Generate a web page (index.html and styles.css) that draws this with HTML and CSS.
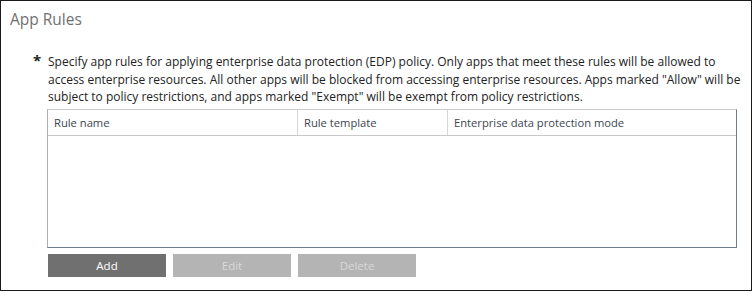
FILE: index.html
```html
<!DOCTYPE html>
<html>
<head>
<meta charset="utf-8">
<link rel="stylesheet" href="styles.css">
</head>
<body>
<div class="panel">
  <div class="title">App Rules</div>
  <div class="desc">
    <span class="req">*</span>
    <p class="text">Specify app rules for applying enterprise data protection (EDP) policy. Only apps that meet these rules will be allowed to access enterprise resources. All other apps will be blocked from accessing enterprise resources. Apps marked "Allow" will be subject to policy restrictions, and apps marked "Exempt" will be exempt from policy restrictions.</p>
  </div>
  <div class="grid">
    <div class="head">
      <div class="col c1">Rule name</div>
      <div class="col c2">Rule template</div>
      <div class="col c3">Enterprise data protection mode</div>
    </div>
    <div class="body"></div>
  </div>
  <div class="actions">
    <button class="btn primary">Add</button>
    <button class="btn disabled">Edit</button>
    <button class="btn disabled">Delete</button>
  </div>
</div>
</body>
</html>
```
FILE: styles.css
```css
html, body {
  margin: 0;
  padding: 0;
  background: #fff;
}
body {
  font-family: "Open Sans", "Noto Sans", sans-serif;
  font-size: 12px;
  color: #222;
}
.panel {
  width: 750px;
  height: 289px;
  border: 1px solid #1a1a1a;
  background: #fff;
}
.title {
  margin: 8px 0 0 9px;
  font-size: 15.5px;
  line-height: 20px;
  color: #707070;
}
.desc {
  display: flex;
  margin: 24px 0 0 32px;
}
.req {
  width: 15px;
  flex: none;
  font-size: 15px;
  font-weight: bold;
  line-height: 15px;
  color: #222;
}
.text {
  margin: 0;
  width: 706px;
  line-height: 17.5px;
  font-size: 12px;
}
.grid {
  margin: 3px 0 0 46px;
  width: 688px;
  height: 137px;
  border-style: solid;
  border-width: 1px;
  border-color: #c9c9c9 #6f7e8b #6f7e8b #a6afb7;
  display: flex;
  flex-direction: column;
}
.head {
  display: flex;
  height: 25px;
  border-bottom: 1px solid #c9c9c9;
}
.col {
  display: flex;
  align-items: center;
  padding-left: 6px;
  color: #3b4650;
  font-size: 11.2px;
}
.c1 { width: 243px; border-right: 1px solid #d6d6d6; }
.c2 { width: 143px; border-right: 1px solid #d6d6d6; }
.c3 { flex: 1; }
.body { flex: 1; }
.actions {
  display: flex;
  gap: 7px;
  margin: 6px 0 0 47px;
}
.btn {
  width: 118px;
  height: 23px;
  border: 0;
  padding: 0;
  font-family: "Open Sans", "Noto Sans", sans-serif;
  font-size: 11.5px;
}
.primary {
  background: #707070;
  color: #fff;
}
.disabled {
  background: #b4b4b4;
  color: #d9d9d9;
}
```
